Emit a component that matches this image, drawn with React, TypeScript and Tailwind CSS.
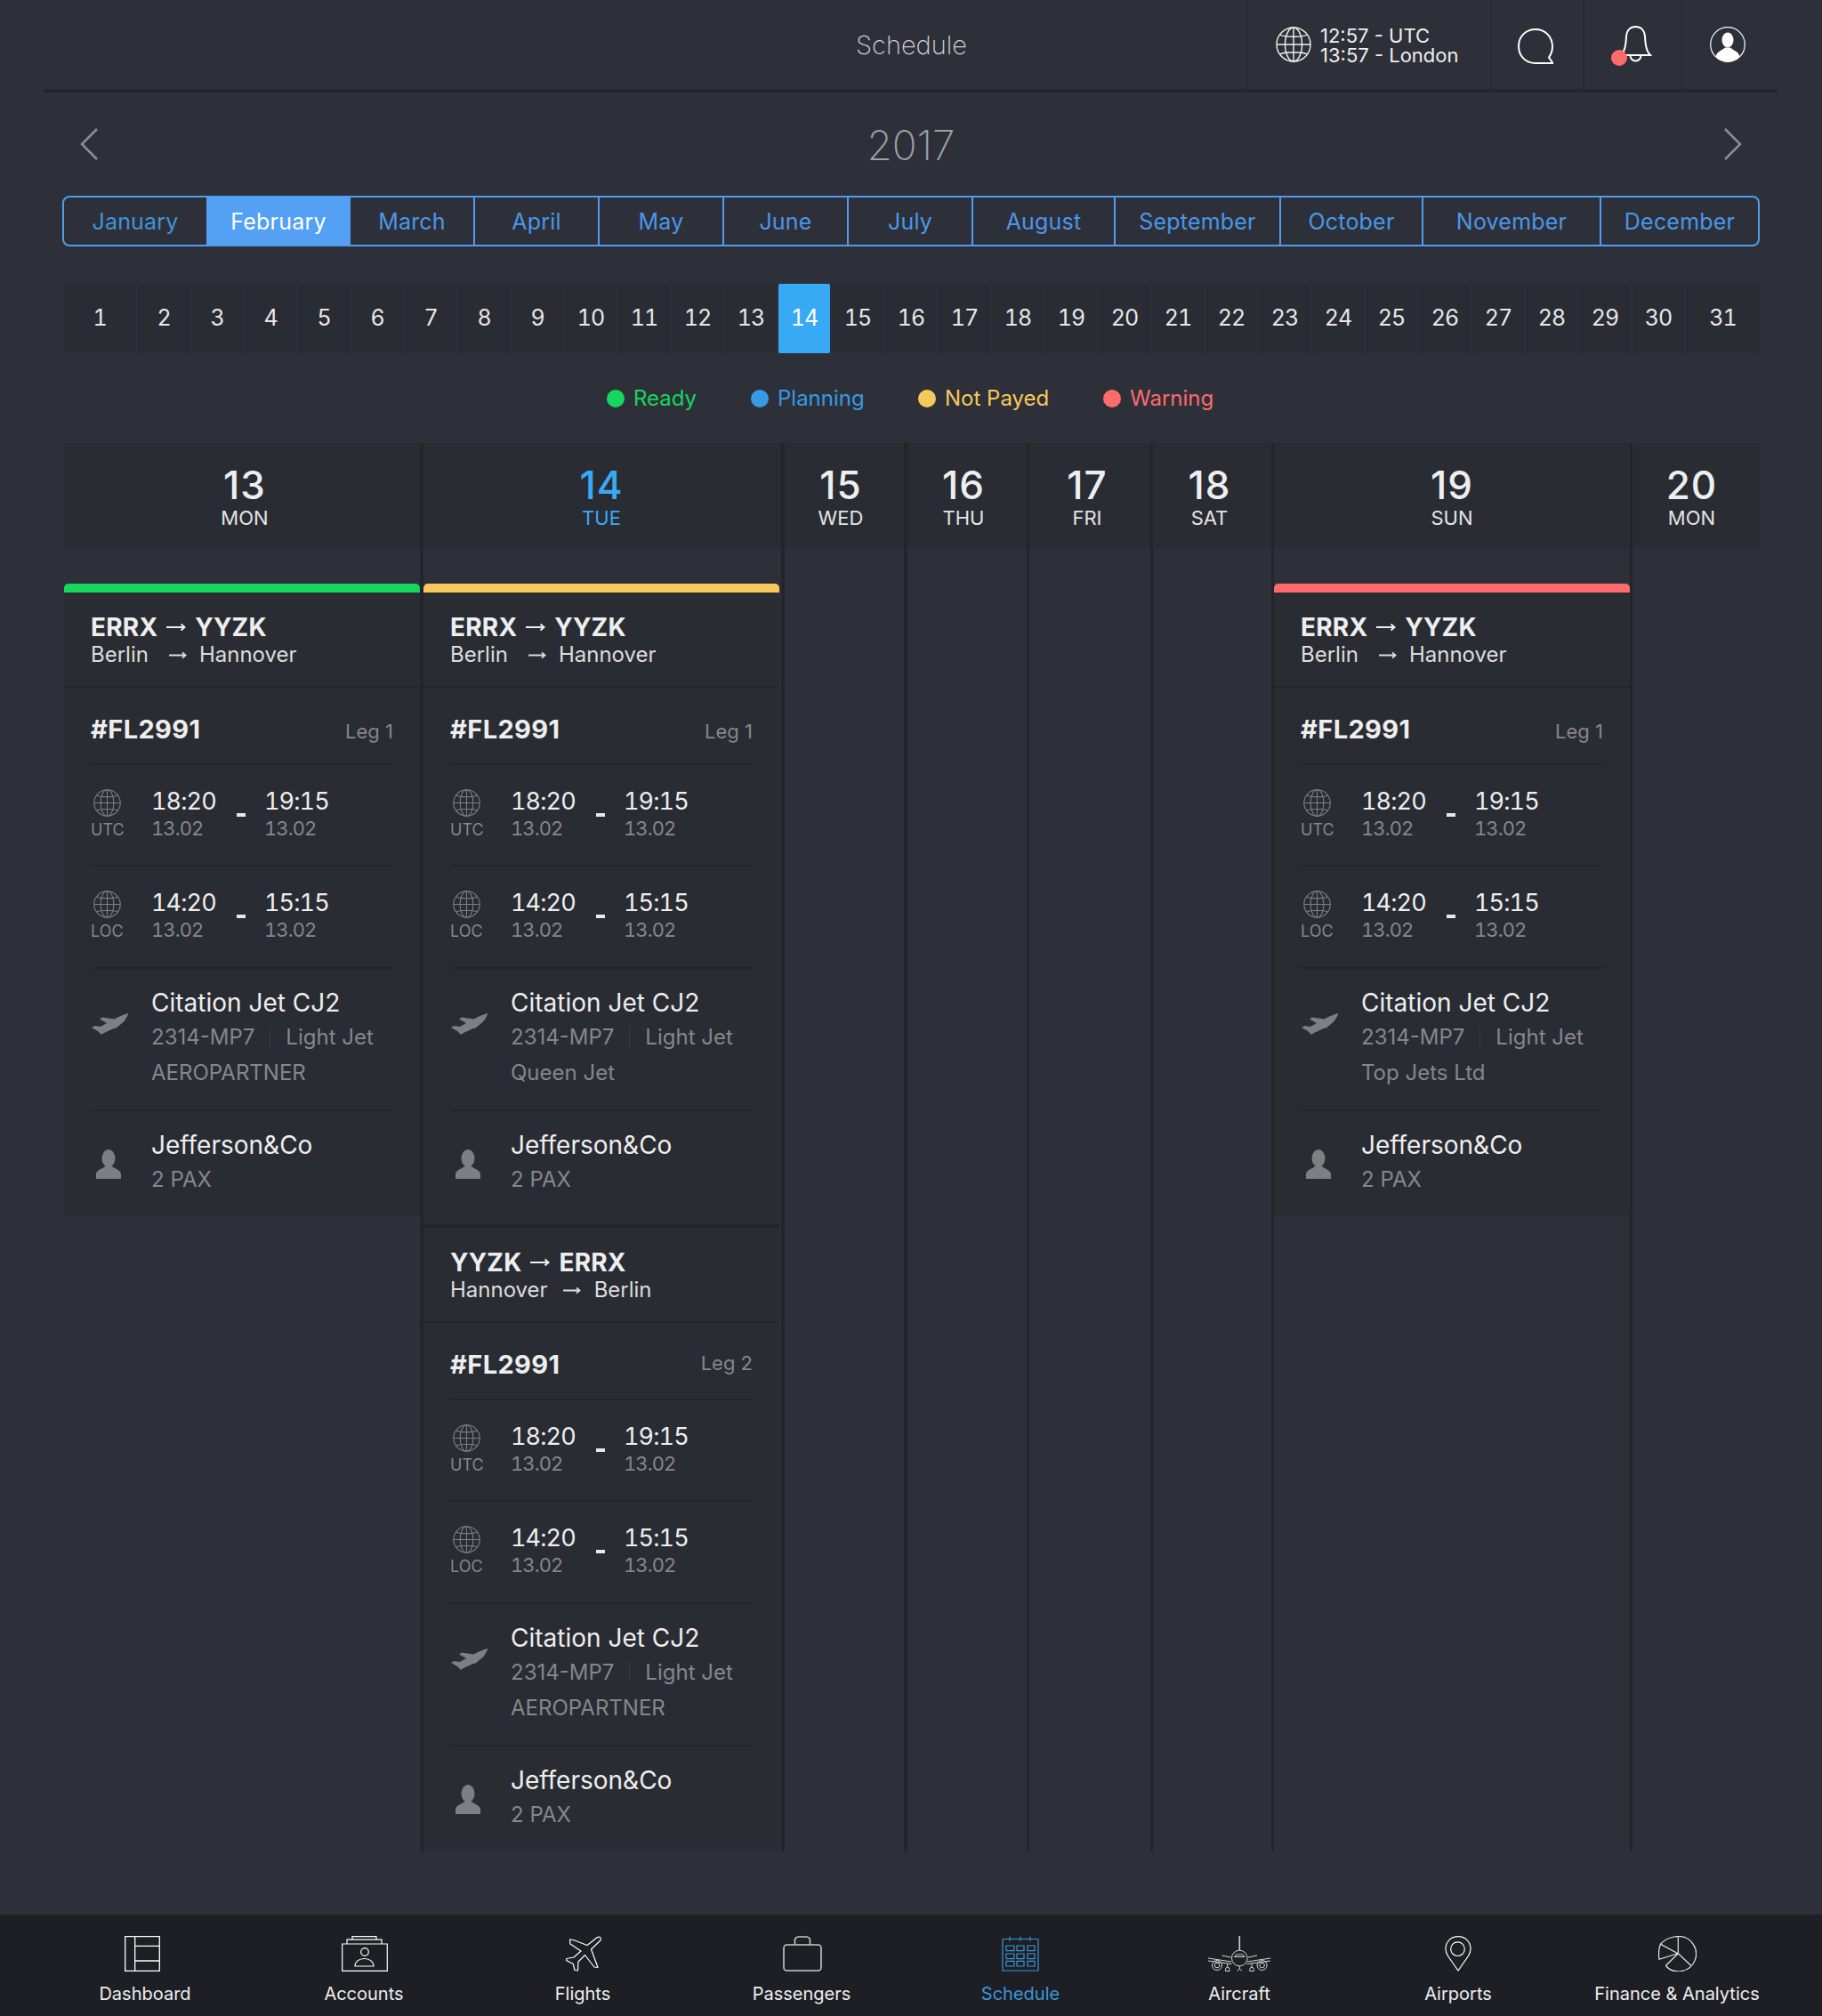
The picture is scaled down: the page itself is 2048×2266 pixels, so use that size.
const months = ["January", "February", "March", "April", "May", "June", "July", "August", "September", "October", "November", "December"];
const days = Array.from({ length: 31 }, (_, i) => i + 1);

const legend = [
  { label: "Ready", dot: "bg-[#16d65f]", text: "text-[#16d65f]" },
  { label: "Planning", dot: "bg-[#389ae4]", text: "text-[#389ae4]" },
  { label: "Not Payed", dot: "bg-[#f7c95c]", text: "text-[#f7c95c]" },
  { label: "Warning", dot: "bg-[#ff6b6b]", text: "text-[#ff6b6b]" },
];

function Globe({ className }: { className: string }) {
  return (
    <svg viewBox="0 0 40 40" fill="none" stroke="currentColor" strokeWidth="1.4" className={className}>
      <circle cx="20" cy="20" r="19" />
      <ellipse cx="20" cy="20" rx="9.5" ry="19" />
      <path d="M20 1v38M1 20h38M4.5 9C10 12 30 12 35.500 9M4.500 31C10 28 30 28 35.500 31" />
    </svg>
  );
}

function Arrow({ className }: { className: string }) {
  return (
    <svg viewBox="0 0 22 10" fill="none" stroke="currentColor" strokeWidth="2" className={className}>
      <path d="M0 5h20M16.500 1.500 20.500 5l-4 3.500" />
    </svg>
  );
}

function Jet() {
  return (
    <svg viewBox="0 0 41 25" className="w-[41px] h-[25px] fill-[#7e7f82]">
      <path d="M41 .8C36 2.500 30 5 25.500 7.500L12 5.500 9 7.500l8 4.500-7 4-6.500-1L0 17l7 4 4 4 3-2 12-5.500 1 .5 9-7.500C39 7 41 3 41 .8Z" />
    </svg>
  );
}

function Person() {
  return (
    <svg viewBox="0 0 28 33" className="w-[28px] h-[33px] fill-[#7e7f82]">
      <ellipse cx="14" cy="10" rx="7.500" ry="10" />
      <path d="M0 33v-5c0-5 7-6 10-9h8c3 3 10 4 10 9v5Z" />
    </svg>
  );
}

function TimeRow({ zone, from, to, height }: { zone: string; from: string; to: string; height: string }) {
  return (
    <div className={`mx-[30px] flex border-b-2 border-[#23252b] box-border ${height}`}>
      <div className="w-[68px] pt-[27px]">
        <Globe className="ml-[3px] w-[31px] h-[31px] text-[#7e7f82]" />
        <div className="mt-[4px] text-[18px] leading-[22px] text-[#85878c]">{zone}</div>
      </div>
      <div className="w-[96px] pt-[25px] tabular-nums tracking-[-0.9px]">
        <div className="text-[27px] leading-[32px] text-[#eeeeee]">{from}</div>
        <div className="text-[22px] leading-[28px] text-[#85878c]">13.02</div>
      </div>
      <div className="mt-[54px] w-[10px] h-[4px] bg-[#e8e8e8]" />
      <div className="ml-[21px] pt-[25px] tabular-nums tracking-[-0.9px]">
        <div className="text-[27px] leading-[32px] text-[#eeeeee]">{to}</div>
        <div className="text-[22px] leading-[28px] text-[#85878c]">13.02</div>
      </div>
    </div>
  );
}

type LegProps = { a: string; b: string; cityA: string; cityB: string; cityArrow: string; leg: string; legClass?: string; operator: string };

function Leg({ a, b, cityA, cityB, cityArrow, leg, legClass, operator }: LegProps) {
  return (
    <div>
      <div className="h-[107px] box-border border-b-2 border-[#23252b] pt-[23px] px-[30px]">
        <div className="flex items-center text-[28px] leading-[32px] font-bold tracking-[0.2px] text-[#eeeeee]">
          {a}
          <Arrow className="mx-[10px] w-[22px] h-[10px] text-[#eeeeee]" />
          {b}
        </div>
        <div className="flex items-center text-[24px] leading-[30px] text-[#dddddd]">
          {cityA}
          <Arrow className={`w-[20px] h-[9px] text-[#dddddd] ${cityArrow}`} />
          {cityB}
        </div>
      </div>
      <div className="mx-[30px] h-[87px] box-border border-b-2 border-[#23252b] pt-[28px] flex items-baseline justify-between">
        <span className="text-[29px] leading-[38px] font-bold tracking-[0.4px] text-[#eeeeee]">#FL2991</span>
        <span className={`text-[22px] text-[#85878c] ${legClass ?? ""}`}>{leg}</span>
      </div>
      <TimeRow zone="UTC" from="18:20" to="19:15" height="h-[114px]" />
      <TimeRow zone="LOC" from="14:20" to="15:15" height="h-[115px]" />
      <div className="mx-[30px] h-[160px] box-border border-b-2 border-[#23252b] flex">
        <div className="w-[68px] pt-[49px] pl-[1px]">
          <Jet />
        </div>
        <div className="pt-[22px]">
          <div className="text-[28px] leading-[32px] text-[#eeeeee]">Citation Jet CJ2</div>
          <div className="mt-[3px] flex items-center text-[24px] leading-[40px] text-[#85878c]">
            2314-MP7
            <span className="mx-[17px] w-[1px] h-[24px] bg-[#3a3c43]" />
            Light Jet
          </div>
          <div className="text-[24px] leading-[40px] text-[#85878c]">{operator}</div>
        </div>
      </div>
      <div className="mx-[30px] h-[117px] flex">
        <div className="w-[68px] pt-[43px] pl-[6px]">
          <Person />
        </div>
        <div className="pt-[22px]">
          <div className="text-[28px] leading-[32px] text-[#eeeeee]">Jefferson&amp;Co</div>
          <div className="mt-[7px] text-[24px] leading-[32px] text-[#85878c]">2 PAX</div>
        </div>
      </div>
    </div>
  );
}

const columns = [
  { day: 13, wd: "MON", box: "w-[404px] border-r-4", head: "pl-[6px]", bar: "bg-[#16d65f]", operator: "AEROPARTNER" },
  { day: 14, wd: "TUE", box: "w-[406px] border-r-4", head: "pr-[2px]", bar: "bg-[#f7c95c]", operator: "Queen Jet", today: true, second: true },
  { day: 15, wd: "WED", box: "w-[138px] border-r-4", head: "pr-[8px]" },
  { day: 16, wd: "THU", box: "w-[137px] border-r-3", head: "pr-[8px]" },
  { day: 17, wd: "FRI", box: "w-[139px] border-r-3", head: "pr-[6px]" },
  { day: 18, wd: "SAT", box: "w-[136px] border-r-3", head: "pr-[6px]" },
  { day: 19, wd: "SUN", box: "w-[403px] border-r-3", head: "", bar: "bg-[#ff6b6b]", operator: "Top Jets Ltd" },
  { day: 20, wd: "MON", box: "w-[143px]", head: "pr-[10px]" },
];

function Navicon({ name }: { name: string }) {
  if (name === "Dashboard")
    return (
      <svg viewBox="0 0 40 40" fill="none" stroke="#ffffff" strokeWidth="1.3" className="w-[40px] h-[40px] -ml-[6px]">
        <path d="M.7.7h38.600v38.600H.7ZM11.700.7v38.600M11.700 11.300h27.600M11.700 28h27.600" />
      </svg>
    );
  if (name === "Accounts")
    return (
      <svg viewBox="0 0 52 40" fill="none" stroke="#ffffff" strokeWidth="1.2" className="w-[52px] h-[40px] ml-[2px]">
        <path d="M.7 9h50.600v30.300H.7ZM6 9V4.200h39V9M12 4.200V.7h27v3.500" />
        <circle cx="26" cy="18" r="4.300" />
        <path d="M15 34c0-5 4.500-8.500 10.500-8.500S36 29 36 34Z" />
      </svg>
    );
  if (name === "Flights")
    return (
      <svg viewBox="0 0 40 40" fill="none" stroke="#ffffff" strokeWidth="1.2" strokeLinejoin="round" className="w-[40px] h-[40px] ml-[2px]">
        <path d="M35.500 1.500C38 .3 40 2 39 5L28.500 15 36 35.500 32 35 21.500 21.500 14 29l-.5 10-3.500-.5L8.300 31.500.5 27.500 1 25.500l8-1.500 8-7L5 9l-.5-5 4 .5L24 10.500Z" />
      </svg>
    );
  if (name === "Passengers")
    return (
      <svg viewBox="0 0 44 40" fill="none" stroke="#c9c9c9" strokeWidth="1.6" className="w-[44px] h-[40px] ml-[2px]">
        <rect x="1" y="10" width="42" height="29" rx="3.500" />
        <path d="M13.500 10V5.500a4 4 0 0 1 4-4.500h9a4 4 0 0 1 4 4.500V10" />
      </svg>
    );
  if (name === "Schedule")
    return (
      <svg viewBox="0 0 42 40" fill="none" stroke="#3d95d8" strokeWidth="1.2" className="w-[42px] h-[40px]">
        <path d="M1 39V4.500a1 1 0 0 1 1-1h38a1 1 0 0 1 1 1V39ZM9 .7v5M21 .7v5M32 .7v5" />
        <path d="M5 11h9v5.700H5ZM17 11h8v5.700h-8ZM29 11h8v5.700h-8ZM5 20h9v5.700H5ZM17 20h8v5.700h-8ZM29 20h8v5.700h-8ZM5 28.300h9V34H5ZM17 28.300h8V34h-8ZM29 28.300h8V34h-8Z" />
      </svg>
    );
  if (name === "Aircraft")
    return (
      <svg viewBox="0 0 70 40" fill="none" stroke="#d4d4d4" strokeWidth="1" className="w-[70px] h-[40px]">
        <path d="M35.300 0v16" strokeWidth="1.6" />
        <circle cx="35.300" cy="25" r="8.800" />
        <path d="M29 23.500h12.600M30.500 23.500l1-2.500h7.600l1 2.500" />
        <path d="M15.500 22l10 2M55 22l-10 2" />
        <path d="M0 25l26 4M0 28l26.500 3.500M70 25l-26 4M70 28l-26.500 3.500" />
        <circle cx="10" cy="33" r="5.500" />
        <circle cx="10" cy="33" r="2.800" />
        <circle cx="60.600" cy="33" r="5.500" />
        <circle cx="60.600" cy="33" r="2.800" />
        <path d="M21.700 31v4M19.500 37.500a2 2 0 0 1 4.500 0v2h-4.500ZM49 31v4M46.800 37.500a2 2 0 0 1 4.500 0v2h-4.500ZM35.300 34v3M32.500 39.500l2.800-2.500 2.800 2.500" />
      </svg>
    );
  if (name === "Airports")
    return (
      <svg viewBox="0 0 30 40" fill="none" stroke="#ffffff" strokeWidth="1.2" className="w-[30px] h-[40px]">
        <path d="M15 39 3.500 22.500C2 20 1 17.500 1 14.500 1 6.500 7 .7 15 .7s14 5.800 14 13.800c0 3-1 5.500-2.500 8Z" />
        <circle cx="14.500" cy="14.700" r="7.800" />
      </svg>
    );
  return (
    <svg viewBox="0 0 43 40" fill="none" stroke="#e8e8e8" strokeWidth="1.2" className="w-[43px] h-[40px]">
      <path d="M22.300 .5A19.700 19.700 0 1 1 8.300 33.500" />
      <path d="M22.300 .5v19.200L36.700 33.300M22.300 19.700 8.300 33.500M22 19.700 2.400 9.200Q-.5 17 1 26.300ZM2.400 9.200Q10 1 22.300 .5" />
    </svg>
  );
}

const nav = ["Dashboard", "Accounts", "Flights", "Passengers", "Schedule", "Aircraft", "Airports", "Finance & Analytics"];

export default function App() {
  return (
    <div className="w-[2048px] h-[2266px] flex flex-col bg-[#2e3039] overflow-hidden font-['Inter','Noto_Sans',sans-serif]">
      {/* top bar */}
      <header className="mx-[50px] h-[104px] shrink-0 box-border border-b-4 border-[#25272e] flex">
        <div className="w-[1351px] pl-[598px] pt-[2px] flex items-center justify-center text-[29px] font-extralight text-[#d0d1d4]">Schedule</div>
        <div className="w-[274px] border-l-2 border-[#292b32] pl-[31px] flex items-center">
          <Globe className="w-[40px] h-[40px] text-[#f0f0f0]" />
          <div className="ml-[10px] pt-[2px] text-[22px] leading-[22px] text-[#eeeeee]">
            <div>12:57 - UTC</div>
            <div>13:57 - London</div>
          </div>
        </div>
        <div className="w-[104px] border-l-2 border-[#292b32] flex items-center justify-center pr-[5px]">
          <svg viewBox="0 0 40 40" fill="none" stroke="#ffffff" strokeWidth="2" className="w-[40px] h-[40px] mt-[4px]">
            <path d="M20 1c11 0 19 8.500 19 19.500 0 4.500-1.500 8.500-4 12l4.500 6.500H20C9 39 1 31 1 20S9 1 20 1Z" />
          </svg>
        </div>
        <div className="w-[110px] border-l-2 border-[#292b32] flex items-center justify-center pl-[8px]">
          <div className="relative w-[36px] h-[42px]">
            <svg viewBox="0 0 36 42" fill="none" stroke="#ffffff" strokeWidth="2" className="w-[36px] h-[42px]">
              <path d="M1 33c5-5 5.500-13 6-21C7.500 5 11.500 1 17.500 1S27.500 5 28 12c.5 8 1 16 6 21ZM11.500 33.500a6 6 0 0 0 12 0" />
            </svg>
            <span className="absolute -left-[10px] top-[27px] w-[18px] h-[18px] rounded-full bg-[#ff6b6b]" />
          </div>
        </div>
        <div className="w-[109px] border-l-2 border-[#292b32] flex items-center justify-center pr-[6px]">
          <svg viewBox="0 0 40 40" className="w-[40px] h-[40px]">
            <circle cx="20" cy="20" r="19.300" fill="none" stroke="#ffffff" strokeWidth="1.200" />
            <ellipse cx="20" cy="15" rx="6.500" ry="8.500" fill="#ffffff" />
            <path d="M6.500 33.500C8 27.500 14 26.500 17 23.500h6c3 3 9 4 10.500 10C30 37.500 25 39.500 20 39.500s-10-2-13.500-6Z" fill="#ffffff" />
          </svg>
        </div>
      </header>

      {/* year */}
      <div className="mx-[90px] h-[116px] shrink-0 flex items-center justify-between">
        <svg viewBox="0 0 20 36" fill="none" stroke="#8e8f92" strokeWidth="2.500" className="w-[20px] h-[36px]">
          <path d="M19 1 2 18l17 17" />
        </svg>
        <div className="pt-[2px] text-[46px] font-extralight text-[#a0a1a5]">2017</div>
        <svg viewBox="0 0 20 36" fill="none" stroke="#8e8f92" strokeWidth="2.500" className="w-[20px] h-[36px]">
          <path d="m1 1 17 17L1 35" />
        </svg>
      </div>

      {/* months */}
      <div className="mx-[70px] h-[57px] shrink-0 box-border border-2 border-[#4f9cf0] rounded-[8px] overflow-hidden grid grid-cols-[160px_162px_140px_140px_140px_140px_140px_160px_186px_160px_200px_176px]">
        {months.map((m, i) => (
          <div
            key={m}
            className={`flex items-center justify-center pt-[2px] text-[25px] tracking-[0.2px] ${i === 1 ? "bg-[#54a0f5] text-[#ffffff]" : i === 0 ? "text-[#3d95d8]" : "text-[#4a97e8]"} ${i > 1 && i < 11 ? "border-r-2 border-[#4f9cf0]" : ""}`}
          >
            {m}
          </div>
        ))}
      </div>

      {/* days */}
      <div className="ml-[71px] mr-[70px] mt-[42px] h-[78px] shrink-0 grid grid-cols-[82px_repeat(29,58px)_83px] gap-[2px]">
        {days.map((d) => (
          <div
            key={d}
            className={`flex items-center justify-center rounded-[2px] text-[25px] tabular-nums tracking-[-1px] ${d === 14 ? "bg-[#38a9f5] text-[#ffffff]" : "bg-[#2a2c33] text-[#e8e8e8]"}`}
          >
            {d}
          </div>
        ))}
      </div>

      {/* legend */}
      <div className="h-[101px] shrink-0 pl-[682px] grid grid-cols-[162px_188px_208px_auto] items-center">
        {legend.map((l) => (
          <div key={l.label} className={`flex items-center gap-[10px] text-[24px] ${l.text}`}>
            <span className={`w-[20px] h-[20px] rounded-full ${l.dot}`} />
            {l.label}
          </div>
        ))}
      </div>

      {/* week */}
      <div className="ml-[72px] h-[1583px] shrink-0 flex">
        {columns.map((c) => (
          <div key={c.day} className={`box-border border-[#23252b] ${c.box}`}>
            <div className={`h-[118px] bg-[#2a2c33] pt-[25px] text-center ${c.head}`}>
              <div className={`text-[44px] leading-[44px] font-medium tracking-[1px] ${c.today ? "text-[#38a9f5]" : "text-[#eeeeee]"}`}>{c.day}</div>
              <div className={`mt-[3px] text-[22px] leading-[24px] ${c.today ? "text-[#38a9f5]" : "text-[#e4e4e4]"}`}>{c.wd}</div>
            </div>
            {c.bar && (
              <div className="w-[400px] mt-[40px]">
                <div className={`h-[10px] rounded-t-[5px] ${c.bar}`} />
                <div className="bg-[#2a2c33]">
                  <Leg a="ERRX" b="YYZK" cityA="Berlin" cityB="Hannover" cityArrow="ml-[23px] mr-[14px]" leg="Leg 1" operator={c.operator} />
                  {c.second && (
                    <>
                      <div className="h-[14px] box-border border-b-4 border-[#23252b]" />
                      <Leg a="YYZK" b="ERRX" cityA="Hannover" cityB="Berlin" cityArrow="ml-[17px] mr-[15px]" leg="Leg 2" legClass="-translate-y-1" operator="AEROPARTNER" />
                    </>
                  )}
                </div>
              </div>
            )}
          </div>
        ))}
      </div>

      {/* bottom nav */}
      <nav className="mt-auto h-[114px] shrink-0 bg-[#1d1f24] px-[40px] grid grid-cols-8">
        {nav.map((n) => (
          <div key={n} className="flex flex-col items-center pt-[24px]">
            <div className="h-[40px] flex items-center">
              <Navicon name={n} />
            </div>
            <div className={`mt-[13px] text-[20px] leading-[24px] whitespace-nowrap ${n === "Schedule" ? "text-[#3d95d8]" : "text-[#eeeeee]"}`}>{n}</div>
          </div>
        ))}
      </nav>
    </div>
  );
}
